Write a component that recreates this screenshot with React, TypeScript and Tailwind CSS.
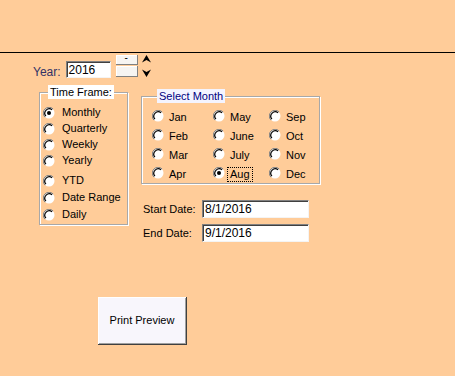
import React from "react";

function Radio({ checked = false }: { checked?: boolean }) {
  return (
    <svg width="12" height="12" viewBox="0 0 12 12" className="shrink-0">
      <circle cx="6" cy="6" r="5.5" fill="#ffffff" />
      <path d="M1.9 10.1 A5.8 5.8 0 0 1 10.1 1.9" fill="none" stroke="#808080" strokeWidth="1" />
      <path d="M2.9 9.1 A4.4 4.4 0 0 1 9.1 2.9" fill="none" stroke="#000000" strokeWidth="1.2" />
      {checked ? <circle cx="6" cy="6" r="2" fill="#000000" /> : null}
    </svg>
  );
}

const timeFrames = [
  { label: "Monthly", checked: true, mt: "mt-[7px]" },
  { label: "Quarterly", mt: "mt-[3px]" },
  { label: "Weekly", mt: "mt-[3px]" },
  { label: "Yearly", mt: "mt-[3px]" },
  { label: "YTD", mt: "mt-[7px]" },
  { label: "Date Range", mt: "mt-[4px]" },
  { label: "Daily", mt: "mt-[4px]" },
];

const months = [
  ["Jan", "May", "Sep"],
  ["Feb", "June", "Oct"],
  ["Mar", "July", "Nov"],
  ["Apr", "Aug", "Dec"],
];

function Sunken({ value, className }: { value: string; className: string }) {
  return (
    <div
      className={`flex items-center bg-white pl-[2px] text-[12px] text-black border-t border-l border-t-[#808080] border-l-[#808080] border-b border-r border-b-[#f4f4f4] border-r-[#f4f4f4] shadow-[inset_1px_1px_0_#404040] ${className}`}
    >
      {value}
    </div>
  );
}

export default function App() {
  return (
    <div className="w-[455px] h-[376px] overflow-hidden bg-[#ffcc99] text-[11px] text-black font-['Liberation_Sans',Arial,sans-serif]">
      <div className="h-[53px] border-b border-black" />

      {/* year row */}
      <div className="flex items-start pl-[33px] pt-[2px]">
        <span className="mt-[8px] text-[12px] text-[#333366]">Year:</span>
        <Sunken value="2016" className="ml-[5px] mt-[6px] w-[45px] h-[17px]" />
        <div className="ml-[5px] flex flex-col gap-[1px]">
          <div className="flex h-[10px] w-[22px] items-start justify-center bg-[#f6f4f2] border-r border-b border-[#808080] shadow-[inset_1px_1px_0_#ffffff] leading-[6px] text-[10px]">
            -
          </div>
          <div className="h-[11px] w-[22px] bg-[#f6f4f2] border-r border-b border-[#808080] shadow-[inset_1px_1px_0_#ffffff]" />
        </div>
        <div className="ml-[4px] flex flex-col gap-[6px]">
          <svg width="9" height="8" viewBox="0 0 9 8">
            <path d="M0 7.5 L4.5 0 L9 7.5 L4.5 5 Z" fill="#000" />
          </svg>
          <svg width="9" height="8" viewBox="0 0 9 8">
            <path d="M0 0.5 L4.5 8 L9 0.5 L4.5 3 Z" fill="#000" />
          </svg>
        </div>
      </div>

      {/* body */}
      <div className="flex items-start pl-[39px] mt-[4px]">
        <fieldset className="w-[89px] h-[140px] border border-[#a8a8a8] shadow-[inset_1px_1px_0_#ffffff,1px_1px_0_#ffffff] pl-[3px]">
          <legend className="ml-[5px] bg-white px-[2px] h-[14px] leading-[14px] text-[11px]">
            Time Frame:
          </legend>
          <div className="flex flex-col">
            {timeFrames.map((t) => (
              <div key={t.label} className={`flex items-center h-[13px] ${t.mt}`}>
                <Radio checked={t.checked} />
                <span className="ml-[7px] leading-[13px]">{t.label}</span>
              </div>
            ))}
          </div>
        </fieldset>

        <div className="ml-[13px] flex flex-col mt-[4px]">
          <fieldset className="w-[177px] h-[95px] border border-[#a8a8a8] shadow-[inset_1px_1px_0_#ffffff,1px_1px_0_#ffffff] pl-[10px]">
            <legend className="ml-[5px] bg-[#f4f4ff] px-[2px] h-[14px] leading-[14px] text-[11px] text-[#000080]">
              Select Month
            </legend>
            <div className="grid grid-cols-[61px_56px_50px] mt-[3px]">
              {months.map((row) =>
                row.map((m) => (
                  <div key={m} className="flex items-center h-[19px]">
                    <Radio checked={m === "Aug"} />
                    {m === "Aug" ? (
                      <span className="ml-[2px] mt-[3px] px-[2px] border border-dotted border-black leading-[13px]">
                        {m}
                      </span>
                    ) : (
                      <span className="ml-[5px] mt-[3px] leading-[13px]">{m}</span>
                    )}
                  </div>
                ))
              )}
            </div>
          </fieldset>

          <div className="mt-[16px] flex items-center">
            <span className="w-[61px] pl-[2px]">Start Date:</span>
            <Sunken value="8/1/2016" className="w-[107px] h-[18px]" />
          </div>
          <div className="mt-[6px] flex items-center">
            <span className="w-[61px] pl-[2px]">End Date:</span>
            <Sunken value="9/1/2016" className="w-[107px] h-[18px]" />
          </div>
        </div>
      </div>

      <div className="pl-[98px] mt-[55px]">
        <div className="flex h-[48px] w-[89px] items-center justify-center bg-[#f8f6fc] border-r border-b border-[#404040] shadow-[inset_1px_1px_0_#ffffff,inset_-1px_-1px_0_#a0a0a0] text-[11px]">
          Print Preview
        </div>
      </div>
    </div>
  );
}
